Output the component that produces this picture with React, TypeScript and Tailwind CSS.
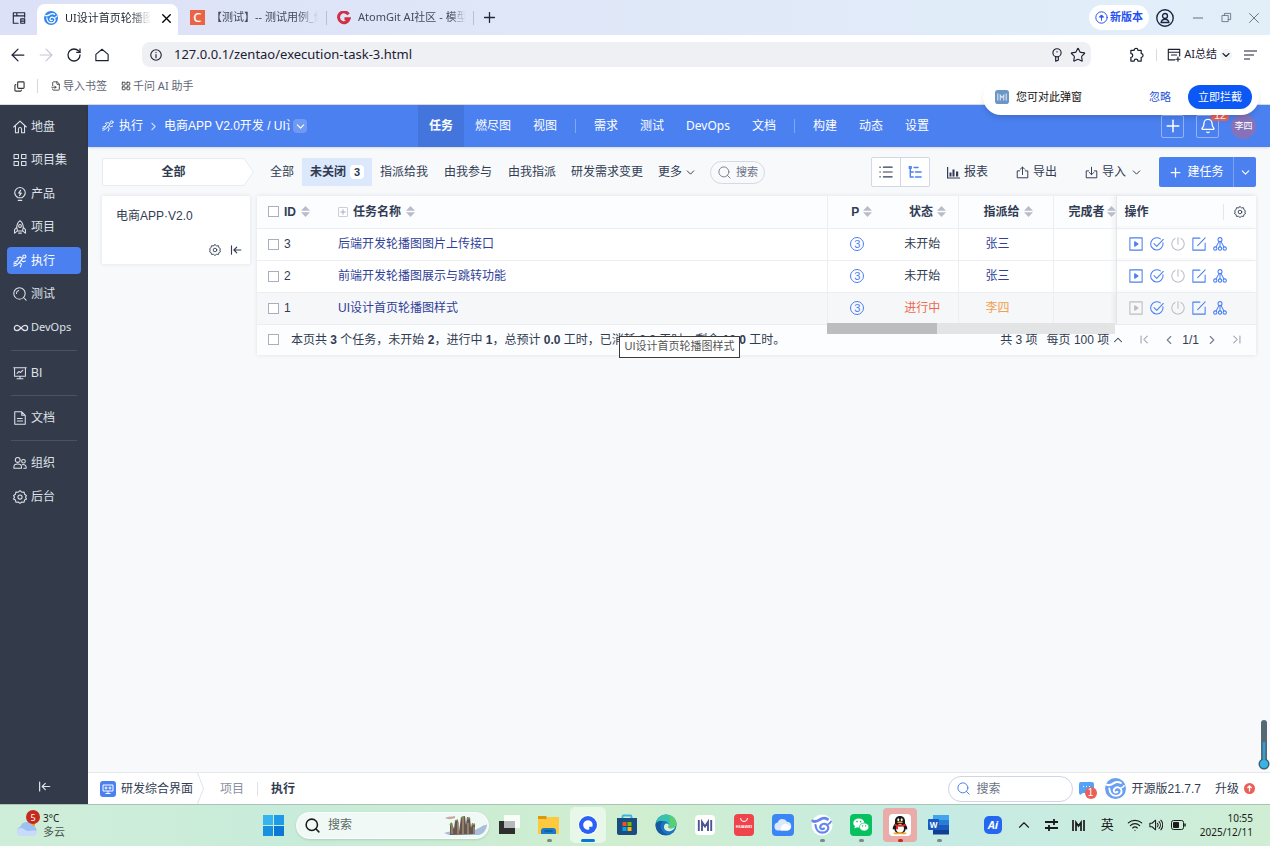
import { useState } from 'react';
import type { ReactNode } from 'react';
import {
    ArrowLeft,
    ArrowRight,
    Bell,
    ChevronDown,
    ChevronLeft,
    ChevronRight,
    ChevronUp,
    Copy,
    FileInput,
    Infinity as InfinityIcon,
    LayoutGrid,
    Minus,
    Plus,
    RotateCw,
    Search,
    Star,
    Wifi,
    X,
} from 'lucide-react';

interface IconProps {
    size?: number;
    className?: string;
}

interface SvgProps extends IconProps {
    children: ReactNode;
    stroke?: number;
}

// Base 16x16 para os ícones de traço
function Line({ size = 14, className, stroke = 1.2, children }: SvgProps) {
    return (
        <svg
            width={size}
            height={size}
            viewBox="0 0 16 16"
            fill="none"
            stroke="currentColor"
            strokeWidth={stroke}
            strokeLinecap="round"
            strokeLinejoin="round"
            className={className}
            aria-hidden="true"
        >
            {children}
        </svg>
    );
}

const HomeIcon = (p: IconProps) => (
    <Line {...p}>
        <path d="M.8 8 8 1.2 15.2 8M2.8 6.5v8h3.4v-4.2a1.8 1.8 0 0 1 3.6 0v4.2h3.4v-8" />
    </Line>
);

const GridIcon = (p: IconProps) => (
    <Line {...p}>
        <path d="M1.2 1.7h5v4.6h-5zM9.8 1.7h5v4.6h-5zM1.2 9.7h5v4.6h-5zM9.8 9.7h5v4.6h-5z" />
    </Line>
);

const BulbIcon = (p: IconProps) => (
    <Line {...p}>
        <path d="M5.7 12.2C3.5 11 2 9 2 6.6a6 6 0 0 1 12 0c0 2.400-1.500 4.400-3.700 5.600zM6 15.300h4" />
        <path d="M8.700 3.800 6.600 6.900h2.800L7.500 9.700" strokeWidth="1.400" />
    </Line>
);

const RocketIcon = (p: IconProps) => (
    <Line {...p}>
        <path d="M8 .8c2.600 2 3.800 4.800 3.600 8.200l-.7 3.500H5.100L4.400 9C4.200 5.600 5.400 2.800 8 .8zM4.300 8.500 1.800 11v4l3-2.300M11.700 8.500l2.500 2.500v4l-3-2.300M6.500 15h3" />
        <circle cx="8" cy="6.800" r="1.600" />
    </Line>
);

const RunIcon = (p: IconProps) => (
    <Line {...p}>
        <circle cx="13" cy="2.900" r="1.800" />
        <path d="M4.500 4.500 8 3.300l3 1.900-3.800 4.300 2.500 1.800-1.300 3.500M9.600 7.600l2 1.300 2.600-.8M7.200 9.500l-2.500 2.800-3.700 1.500M1.200 9.300l3.500-1M.8 11.300l3-.8M6.500 5.600 4.300 8" />
    </Line>
);

const TestIcon = (p: IconProps) => (
    <Line {...p}>
        <circle cx="7.400" cy="7.400" r="6.500" />
        <path d="m12 12 3 3M3.900 7.300a3.500 3.500 0 0 1 2.600-3.300" />
    </Line>
);

const BoardIcon = (p: IconProps) => (
    <Line {...p}>
        <path d="M.8 2h14.400M1.800 2v9.700h12.400V2M4.700 8.400l2.200-2.200 1.600 1.300 2.800-2.700M8 11.700v2.500M4.600 14.600h6.800" />
    </Line>
);

const DocIcon = (p: IconProps) => (
    <Line {...p}>
        <path d="M2 .9h8l4 4v10.200H2zM10 .9v4h4M5 8.500h5.500M5 11.500h6" />
    </Line>
);

const TeamIcon = (p: IconProps) => (
    <Line {...p}>
        <circle cx="5.400" cy="4.500" r="2.800" />
        <circle cx="12" cy="6" r="2.100" />
        <path d="M1 14v-1.500c0-2 1.700-3.300 4.400-3.300s4.300 1.300 4.300 3.300V14zM10.500 9.900c2.700-.4 4.500.8 4.500 2.700V14h-2.700" />
    </Line>
);

const GearIcon = (p: IconProps) => (
    <Line {...p}>
        <path d="m8 .7 2 1.800 2.700-.2.5 2.600 2.200 1.500L14.300 8l1.100 2.200-2.200 1.200-.5 2.500-2.700-.2L8 15.300l-2-1.600-2.700.2-.5-2.500L.6 10.200 1.700 8 .6 6.400l2.200-1.500.5-2.600 2.700.2z" />
        <circle cx="8" cy="8" r="2.400" />
    </Line>
);

const CollapseIcon = (p: IconProps) => (
    <Line {...p} stroke={1.5}>
        <path d="M2 2.500v11M14.500 8H5.500M9 4.200 5.200 8 9 11.800" />
    </Line>
);

const PlayBox = (p: IconProps) => (
    <Line {...p}>
        <path d="M1 1h14v14H1z" />
        <path d="M6.500 5.400v5.200L10.300 8z" fill="currentColor" />
    </Line>
);

const CheckRound = (p: IconProps) => (
    <Line {...p}>
        <path d="M14.700 6.500A7 7 0 1 1 11.900 2.100M4.600 7.600l3.100 3.200L15.200 2.800" />
    </Line>
);

const PowerIcon = (p: IconProps) => (
    <Line {...p}>
        <path d="M4.600 1.700a7.100 7.100 0 1 0 6.800 0M8 .7v7.500" />
    </Line>
);

const EditIcon = (p: IconProps) => (
    <Line {...p}>
        <path d="M9 1.300H1V15h14V7M6.500 9.800l8.500-8.800" />
    </Line>
);

const SplitIcon = (p: IconProps) => (
    <Line {...p}>
        <circle cx="8" cy="3" r="2.300" />
        <circle cx="2.600" cy="13.200" r="1.900" />
        <circle cx="8" cy="13.200" r="1.900" />
        <circle cx="13.400" cy="13.200" r="1.900" />
        <path d="M8 5.300v6M6.900 5 3.500 11.300M9.100 5l3.400 6.300" />
    </Line>
);

const SortIcon = () => (
    <svg width="9" height="11" viewBox="0 0 9 11" fill="#b8bcc8" aria-hidden="true">
        <path d="M4.500 0 9 4.700H0zM4.500 11 0 6.300h9z" />
    </svg>
);

function ZentaoLogo({ size = 14, bg, fg }: { size?: number; bg: string; fg: string }) {
    return (
        <svg width={size} height={size} viewBox="0 0 22 22" className="shrink-0" aria-hidden="true">
            <circle cx="11" cy="11" r="11" fill={bg} />
            <g fill="none" stroke={fg} strokeLinecap="round">
                <path d="M1.800 7C4.500 8.500 7 6.800 9 5.500s4.800-2 7.500-.3" strokeWidth="2.200" />
                <path d="M4.500 11c.3 4.500 3 7.700 7 7.700s6.500-3 5.700-6-5.200-4-7.200-1.500.3 5 3 3.300" strokeWidth="2" />
                <path d="M20 8c-.8 1.500-1.500 2-2.800 2.200" strokeWidth="1.600" />
            </g>
        </svg>
    );
}

function MLogo({ size = 14, bg, fg }: { size?: number; bg: string; fg: string }) {
    return (
        <svg width={size} height={size} viewBox="0 0 20 20" className="shrink-0" aria-hidden="true">
            <rect width="20" height="20" rx="4" fill={bg} />
            <path d="M4 5v10M16 5v10M7.500 15V7.500L10 11l2.500-3.500V15" fill="none" stroke={fg} strokeWidth="1.500" />
        </svg>
    );
}

const GRUPOS = [
    [
        { label: '地盘', Icon: HomeIcon },
        { label: '项目集', Icon: GridIcon },
        { label: '产品', Icon: BulbIcon },
        { label: '项目', Icon: RocketIcon },
        { label: '执行', Icon: RunIcon },
        { label: '测试', Icon: TestIcon },
        { label: 'DevOps', Icon: null },
    ],
    [{ label: 'BI', Icon: BoardIcon }],
    [{ label: '文档', Icon: DocIcon }],
    [
        { label: '组织', Icon: TeamIcon },
        { label: '后台', Icon: GearIcon },
    ],
];

const NAV = [
    ['任务', '燃尽图', '视图'],
    ['需求', '测试', 'DevOps', '文档'],
    ['构建', '动态', '设置'],
];

const TAREFAS = [
    { id: 3, nome: '后端开发轮播图图片上传接口', status: '未开始', responsavel: '张三' },
    { id: 2, nome: '前端开发轮播图展示与跳转功能', status: '未开始', responsavel: '张三' },
    { id: 1, nome: 'UI设计首页轮播图样式', status: '进行中', responsavel: '李四' },
];

const CHECK = 'block size-[11px] shrink-0 appearance-none border border-[#a9afc0] bg-white checked:bg-[#4b80f0]';

function TabStrip() {
    return (
        <div className="flex h-[35px] items-center bg-linear-to-r from-[#dde1f7] to-[#e2eff9] pr-[2px] text-[11px] text-[#444a5a]">
            <button aria-label="标签页" className="flex w-[37px] justify-center text-[#22283a]">
                <Line size={14} stroke={1.3}>
                    <path d="M7 14H1.500V2h13v5M1.500 5.500h13M5.500 2v3.500M10 9h4.500v5H10zM10 11.500h4.500" />
                </Line>
            </button>
            <div className="flex h-[31px] w-[141px] items-center self-end rounded-t-lg bg-white pr-[4px] pb-[3px] pl-[7px] text-[#1f2433]">
                <ZentaoLogo size={14} bg="#2f86ec" fg="#ffffff" />
                <span className="ml-[7px] w-[86px] overflow-hidden whitespace-nowrap mask-r-from-75%">UI设计首页轮播图样式</span>
                <button aria-label="关闭标签页" className="ml-auto text-black">
                    <X size={15} strokeWidth={2.2} />
                </button>
            </div>
            <div className="ml-3 flex items-center">
                <span className="flex size-[15px] items-center justify-center bg-[#ea6444] text-[13px] leading-none font-medium text-white">C</span>
                <span className="ml-[6px] w-[108px] overflow-hidden whitespace-nowrap mask-r-from-80%">【测试】-- 测试用例_你好</span>
            </div>
            <span className="mr-[10px] ml-[7px] h-[14px] w-px bg-[#b9bed2]" />
            <svg width="14" height="14" viewBox="0 0 14 14" fill="none" stroke="#d12f45" strokeWidth="3" aria-hidden="true">
                <path d="M11.500 3.300A5.400 5.400 0 1 0 12.200 7.700H7.500" />
            </svg>
            <span className="ml-[7px] w-[108px] overflow-hidden whitespace-nowrap mask-r-from-85%">AtomGit AI社区 - 模型库</span>
            <span className="ml-[7px] h-[14px] w-px bg-[#b9bed2]" />
            <button aria-label="新标签页" className="ml-[7px] text-[#22283a]">
                <Plus size={17} strokeWidth={1.8} />
            </button>
            <button className="ml-auto flex h-[25px] items-center gap-[2px] rounded-full bg-white px-[6px] font-bold text-[#2450f0]">
                <Line size={13}>
                    <circle cx="8" cy="8" r="7" />
                    <path d="M8 11.500v-5M5.700 7.200 8 4.800l2.300 2.400z" fill="currentColor" />
                </Line>
                新版本
            </button>
            <button aria-label="账户" className="ml-[7px] text-[#1c2340]">
                <Line size={18} stroke={1.2}>
                    <circle cx="8" cy="8" r="7.300" />
                    <circle cx="8" cy="6.200" r="2.200" />
                    <path d="M4.500 12c.4-2 1.700-2.900 3.500-2.900s3.100.9 3.500 2.900z" />
                </Line>
            </button>
            <div className="ml-[10px] flex items-center text-[#6b7180]">
                <button aria-label="最小化" className="flex w-7 justify-center"><Minus size={16} strokeWidth={1.5} /></button>
                <button aria-label="还原" className="flex w-7 justify-center">
                    <Line size={11} stroke={1.3}>
                        <path d="M2 5h8.500v9H2zM5 5V2h9v9h-3.500" />
                    </Line>
                </button>
                <button aria-label="关闭" className="flex w-7 justify-center"><X size={18} strokeWidth={1.3} /></button>
            </div>
        </div>
    );
}

function AddressBar() {
    return (
        <div className="flex h-[39px] items-center bg-white pr-[13px] pl-2 text-[#1c2033]">
            <div className="flex items-center gap-2">
                <button aria-label="后退" className="flex w-5 justify-center"><ArrowLeft size={20} strokeWidth={1.5} /></button>
                <button aria-label="前进" className="flex w-5 justify-center text-[#c3c6cf]"><ArrowRight size={20} strokeWidth={1.3} /></button>
                <button aria-label="刷新" className="flex w-5 justify-center"><RotateCw size={16} strokeWidth={1.9} /></button>
                <button aria-label="主页" className="flex w-5 justify-center">
                    <Line size={14} stroke={1.3}>
                        <path d="M8 1.500 1 7.300V14.500h14V7.300z" />
                    </Line>
                </button>
            </div>
            <div className="ml-[30px] flex h-[25px] w-[949px] items-center rounded-lg bg-[#eff0f3] pr-[5px] pl-2">
                <Line size={12} stroke={1.5}>
                    <circle cx="8" cy="8" r="7" />
                    <path d="M8 7.500v4M8 4.500v.3" />
                </Line>
                <input
                    aria-label="地址"
                    defaultValue="127.0.0.1/zentao/execution-task-3.html"
                    className="ml-3 min-w-0 flex-1 bg-transparent text-[13px] outline-none"
                />
                <button aria-label="密码">
                    <Line size={14} stroke={1.3}>
                        <circle cx="8" cy="5.500" r="4.700" />
                        <path d="M6.500 10v5l3-1v-4M8 4v.5" />
                    </Line>
                </button>
                <button aria-label="收藏" className="ml-[6px]"><Star size={16} strokeWidth={1.7} /></button>
            </div>
            <div className="ml-auto flex items-center">
                <button aria-label="扩展">
                    <Line size={15} stroke={1.3}>
                        <path d="M2 3.500h3.500a2 2 0 0 1 4 0H13V7a2 2 0 0 1 0 4v4H9.500a2 2 0 0 0-4 0H2v-4a2 2 0 0 0 0-4z" />
                    </Line>
                </button>
                <span className="mr-[10px] ml-3 h-3 w-px bg-[#d9dbe1]" />
                <button className="flex items-center gap-[3px] text-[11px]">
                    <Line size={14} stroke={1.3}>
                        <path d="M9 13.500H1.500V1.500h13V9M1.500 4.800h13M5 8h6M12.500 10.500v4.500M10.300 12.800h4.500" />
                    </Line>
                    AI总结
                    <span className="flex size-3 items-center justify-center rounded-full bg-[#f2f3f5]">
                        <ChevronDown size={12} strokeWidth={2.2} />
                    </span>
                </button>
                <button aria-label="菜单" className="ml-[11px]">
                    <svg width="14" height="10" viewBox="0 0 14 10" stroke="currentColor" strokeWidth="1.200" aria-hidden="true">
                        <path d="M1 1h13M1 5h10M1 9h6" />
                    </svg>
                </button>
            </div>
        </div>
    );
}

function BookmarkBar() {
    return (
        <div className="flex h-[31px] items-center border-b border-[#dcdde0] bg-white pb-[6px] pl-[14px] text-[11px] text-[#5e6475]">
            <Copy size={11} strokeWidth={2.4} className="-scale-y-100 text-[#333]" />
            <span className="mr-[13px] ml-3 h-[14px] w-px bg-[#d5d7dd]" />
            <a href="#importar" className="flex items-center gap-[2px]">
                <FileInput size={10} className="text-[#333]" />导入书签
            </a>
            <a href="#assistente" className="ml-[14px] flex items-center gap-[2px]">
                <LayoutGrid size={10} className="text-[#333]" />千问 AI 助手
            </a>
        </div>
    );
}

function PopupBlocker() {
    return (
        <div role="alert" className="absolute top-[79px] right-[11px] z-20 flex h-9 w-[276px] items-center rounded-full bg-white pr-[7px] pl-3 text-[11px] text-[#111] shadow-md">
            <MLogo size={14} bg="#6b96c6" fg="#dfeaf6" />
            <span className="ml-[7px]">您可对此弹窗</span>
            <button className="ml-auto text-[#1f55d8]">忽略</button>
            <button className="ml-[17px] h-6 w-16 rounded-full bg-[#0b58f5] text-white">立即拦截</button>
        </div>
    );
}

function Sidebar() {
    return (
        <aside className="flex w-[88px] shrink-0 flex-col bg-[#333a49] px-[7px] pt-2 text-xs text-[#dfe2ea]">
            {GRUPOS.map((grupo, i) => (
                <div key={grupo[0].label}>
                    {i > 0 && <hr className="mx-1 mt-[9px] mb-2 border-[#4b5262]" />}
                    <nav className={i === 0 ? 'flex h-57 flex-col justify-between' : 'flex flex-col gap-[7px]'}>
                        {grupo.map(({ label, Icon }) => (
                            <a
                                key={label}
                                href={`#${label}`}
                                className={
                                    label === '执行'
                                        ? 'flex h-[27px] items-center gap-1 rounded-sm bg-[#4b80f0] pl-[6px] text-white'
                                        : 'flex h-[27px] items-center gap-1 pl-[6px]'
                                }
                            >
                                {Icon ? <Icon size={14} /> : <InfinityIcon size={16} strokeWidth={1.8} className="-mr-[2px]" />}
                                {label === 'DevOps' ? <span className="font-['Noto_Sans'] text-[11px]">{label}</span> : label}
                            </a>
                        ))}
                    </nav>
                </div>
            ))}
            <button aria-label="收起菜单" className="mx-auto mt-auto mb-[11px]">
                <CollapseIcon size={13} />
            </button>
        </aside>
    );
}

function TopNav() {
    return (
        <header className="flex h-[42px] items-center bg-[#4b80f0] pr-[14px] pl-[14px] text-xs text-white shadow-sm">
            <div className="flex w-[316px] items-center">
                <RunIcon size={12} />
                <a href="#execucao" className="ml-[5px]">执行</a>
                <ChevronRight size={13} className="mx-1 opacity-70" />
                <a href="#projeto" className="w-[126px] overflow-hidden whitespace-nowrap">电商APP V2.0开发 / UI设计</a>
                <button aria-label="切换执行" className="ml-[3px] flex size-[14px] items-center justify-center rounded-sm bg-white/20">
                    <ChevronDown size={13} />
                </button>
            </div>
            <nav className="flex h-full items-center">
                {NAV.map((grupo, i) => (
                    <div key={grupo[0]} className="flex h-full items-center">
                        {i > 0 && <span className="mx-[7px] h-[14px] w-px bg-white/30" />}
                        {grupo.map(item => (
                            <a
                                key={item}
                                href={`#${item}`}
                                className={
                                    item === '任务'
                                        ? 'flex h-full items-center bg-[#4475dc] px-[11px] font-bold'
                                        : "flex h-full items-center px-[11px] font-['Noto_Sans','Noto_Sans_CJK_SC',sans-serif]"
                                }
                            >
                                {item}
                            </a>
                        ))}
                    </div>
                ))}
            </nav>
            <div className="ml-auto flex items-center gap-3">
                <button aria-label="新建" className="flex size-[23px] items-center justify-center rounded-xs border border-white/40">
                    <Plus size={20} strokeWidth={1.8} />
                </button>
                <button aria-label="通知" className="relative flex size-[23px] items-center justify-center rounded-xs border border-white/40">
                    <Bell size={16} />
                    <span className="absolute -top-[6px] left-[14px] flex h-[11px] w-[18px] items-center justify-center rounded-sm bg-[#e8635a] text-[11px] leading-none">12</span>
                </button>
                <button className="size-[25px] rounded-full bg-[#8672b8] text-[9px]">李四</button>
            </div>
        </header>
    );
}

function Toolbar() {
    const item = 'flex h-7 items-center px-2';
    return (
        <div className="flex h-[30px] items-center whitespace-nowrap">
            <button className="flex h-7 w-[152px] font-bold">
                <span className="flex h-full flex-1 items-center justify-center rounded-l-xs border border-r-0 border-[#e8ebf0] bg-white">全部</span>
                <svg width="10" height="28" viewBox="0 0 10 28" fill="#fff" stroke="#e8ebf0" aria-hidden="true">
                    <path d="M0 .5 9.500 14 0 27.500" />
                </svg>
            </button>
            <nav className="ml-2 flex items-center">
                <a href="#todas" className={item}>全部</a>
                <a href="#abertas" className="flex h-7 items-center gap-1 bg-[#dce8fc] px-2 font-bold">
                    未关闭
                    <span className="flex h-[14px] w-[14px] items-center justify-center rounded-sm bg-white text-[11px]">3</span>
                </a>
                <a href="#minhas" className={item}>指派给我</a>
                <a href="#participo" className={item}>由我参与</a>
                <a href="#delegadas" className={item}>由我指派</a>
                <a href="#mudancas" className="flex h-7 items-center px-[7px]">研发需求变更</a>
                <button className="flex h-7 items-center gap-[2px] pl-2">
                    更多
                    <ChevronDown size={13} strokeWidth={1.8} />
                </button>
            </nav>
            <button className="ml-[13px] flex h-[23px] items-center gap-1 rounded-full border border-[#d5d9e6] px-[6px] text-[#6b7387]">
                <Search size={15} strokeWidth={1.4} />
                <span className="text-[11px]">搜索</span>
            </button>
            <div className="ml-auto flex items-center">
                <div className="flex h-[30px] w-[59px] rounded-xs border border-[#d3d8e8] bg-white">
                    <button aria-label="列表" className="flex flex-1 items-center justify-center">
                        <Line size={14} stroke={1.4}>
                            <path d="M1 2.500h.5M1 8h.5M1 13.500h.5M5 2.500h10M5 8h10M5 13.500h10" />
                        </Line>
                    </button>
                    <button aria-label="树状" className="flex flex-1 items-center justify-center border-l border-[#d3d8e8] text-[#4b80f0]">
                        <Line size={14} stroke={1.6}>
                            <path d="M1.500 1.800h2.200v2H1.500zM2.600 4v9.700H6M2.600 8H6M7 2.800h4.500M8.500 8H15M8.500 13.700H15" />
                        </Line>
                    </button>
                </div>
                <button className="ml-[17px] flex items-center gap-1">
                    <svg width="13" height="13" viewBox="0 0 13 13" fill="currentColor" aria-hidden="true">
                        <path d="M0 1h1.200v10.500H13v1H0zM2.500 6.500h2v4h-2zM5.500 3.500h2v7h-2zM9 5.500h2.200v5H9z" />
                    </svg>
                    报表
                </button>
                <button className="ml-7 flex items-center gap-1">
                    <Line size={13}>
                        <path d="M4.500 6H1.500v8.500h13V6h-3M8 10.500v-9M5.300 4 8 1.300 10.700 4" />
                    </Line>
                    导出
                </button>
                <button className="ml-7 flex items-center gap-1">
                    <Line size={13}>
                        <path d="M4.500 6H1.500v8.500h13V6h-3M8 1.500v9M5.300 8 8 10.700 10.700 8" />
                    </Line>
                    导入
                    <ChevronDown size={13} strokeWidth={1.800} />
                </button>
                <div className="ml-4 flex h-[30px] overflow-hidden rounded-xs bg-[#4b80f0] text-white">
                    <button className="flex w-[75px] items-center justify-center gap-1 border-r border-[#7ba2f5]">
                        <Plus size={15} />
                        建任务
                    </button>
                    <button aria-label="更多建任务" className="flex w-[22px] items-center justify-center">
                        <ChevronDown size={13} />
                    </button>
                </div>
            </div>
        </div>
    );
}

function TaskTable() {
    const [marcadas, setMarcadas] = useState<number[]>([]);
    const todas = marcadas.length === TAREFAS.length;

    const alternar = (id: number) => {
        setMarcadas(prev => (prev.includes(id) ? prev.filter(x => x !== id) : [...prev, id]));
    };

    const alternarTodas = () => {
        setMarcadas(todas ? [] : TAREFAS.map(t => t.id));
    };

    return (
        <div className="min-w-0 flex-1 bg-white shadow-[0_0_4px_rgba(40,50,80,0.12)]">
            <table className="w-full table-fixed border-collapse text-left whitespace-nowrap">
                <colgroup>
                    <col className="w-[81px]" />
                    <col />
                    <col className="w-[60px]" />
                    <col className="w-[71px]" />
                    <col className="w-[95px]" />
                    <col className="w-[63px]" />
                    <col className="w-[140px]" />
                </colgroup>
                <thead>
                    <tr className="h-8 border-b border-[#eceef2] bg-[#fcfdfe]">
                        <th className="pl-[11px]">
                            <div className="flex items-center gap-[5px]">
                                <input type="checkbox" aria-label="全选" className={CHECK} checked={todas} onChange={alternarTodas} />
                                ID <SortIcon />
                            </div>
                        </th>
                        <th className="border-r border-[#eceef2]">
                            <div className="flex items-center gap-[5px]">
                                <button aria-label="展开全部" className="flex size-[10px] items-center justify-center rounded-[1px] border border-[#c9cedb] text-[#8790a5]">
                                    <Plus size={10} />
                                </button>
                                任务名称 <SortIcon />
                            </div>
                        </th>
                        <th>
                            <div className="flex items-center justify-center gap-1 pl-[9px]">P <SortIcon /></div>
                        </th>
                        <th className="border-r border-[#eceef2]">
                            <div className="flex items-center gap-1 pl-[22px]">状态 <SortIcon /></div>
                        </th>
                        <th className="border-r border-[#eceef2]">
                            <div className="flex items-center gap-1 pl-[25px]">指派给 <SortIcon /></div>
                        </th>
                        <th className="overflow-hidden">
                            <div className="flex items-center gap-[2px] pl-[15px]">完成者 <SortIcon /></div>
                        </th>
                        <th className="border-l border-[#e3e5ea] shadow-[-3px_0_4px_rgba(40,50,80,0.06)]">
                            <div className="flex items-center pr-[10px] pl-2">
                                操作
                                <span className="mr-[10px] ml-auto h-4 w-px bg-[#e3e6ec]" />
                                <button aria-label="列设置"><GearIcon size={12} /></button>
                            </div>
                        </th>
                    </tr>
                </thead>
                <tbody>
                    {TAREFAS.map(t => {
                        const ativa = t.status === '进行中';
                        return (
                            <tr key={t.id} className={ativa ? 'h-8 border-b border-[#eceef2] bg-[#f6f7f9]' : 'h-8 border-b border-[#eceef2]'}>
                                <td className="pl-[11px]">
                                    <label className="flex items-center gap-[5px]">
                                        <input type="checkbox" className={CHECK} checked={marcadas.includes(t.id)} onChange={() => alternar(t.id)} />
                                        {t.id}
                                    </label>
                                </td>
                                <td className="border-r border-[#eceef2]">
                                    <a href={`#task-${t.id}`} className="text-[#313f98]">{t.nome}</a>
                                </td>
                                <td>
                                    <span className="mx-auto flex size-[14px] items-center justify-center rounded-full border border-[#4b80f0] text-[11px] leading-none text-[#4b80f0]">3</span>
                                </td>
                                <td className={ativa ? 'border-r border-[#eceef2] text-center text-[#ee6a4d]' : 'border-r border-[#eceef2] text-center'}>{t.status}</td>
                                <td className="border-r border-[#eceef2] pl-[27px]">
                                    <a href="#usuario" className={ativa ? 'text-[#f0a04f]' : 'text-[#313f98]'}>{t.responsavel}</a>
                                </td>
                                <td />
                                <td className="border-l border-[#e3e5ea] shadow-[-3px_0_4px_rgba(40,50,80,0.06)]">
                                    <div className="flex items-center gap-[7px] pl-3 text-[#4b80f0]">
                                        <button aria-label="开始" disabled={ativa} className="disabled:text-[#bcbec4]"><PlayBox /></button>
                                        <button aria-label="完成"><CheckRound /></button>
                                        <button aria-label="关闭" disabled className="text-[#bcbec4]"><PowerIcon /></button>
                                        <button aria-label="编辑"><EditIcon /></button>
                                        <button aria-label="拆分"><SplitIcon /></button>
                                    </div>
                                </td>
                            </tr>
                        );
                    })}
                </tbody>
            </table>
            <div className="relative flex h-[30px] items-center bg-[#fcfdfe] pr-[14px] pl-[11px] whitespace-nowrap">
                {/* Barra de rolagem das colunas centrais */}
                <div className="absolute -top-[2px] right-[141px] h-[11px] w-[288px] bg-[#e3e4e6]">
                    <div className="h-full w-[110px] bg-[#bdbdbd]" />
                </div>
                <label className="flex items-center gap-3">
                    <input type="checkbox" className={CHECK} checked={todas} onChange={alternarTodas} />
                    <span>
                        本页共 <b>3</b> 个任务，未开始 <b>2</b>，进行中 <b>1</b>，总预计 <b>0.0</b> 工时，已消耗 <b>0.0</b> 工时，剩余 <b>10.0</b> 工时。
                    </span>
                </label>
                <div className="ml-auto flex items-center">
                    <span>共 3 项</span>
                    <button className="ml-[9px] flex items-center gap-[2px]">
                        每页 100 项 <ChevronUp size={14} strokeWidth={1.8} />
                    </button>
                    <button aria-label="第一页" className="ml-[14px] text-[#9aa0ae]">
                        <Line size={11} stroke={1.5}><path d="M3 3v10M12 3 7 8l5 5" /></Line>
                    </button>
                    <button aria-label="上一页" className="ml-3 text-[#7b8295]"><ChevronLeft size={14} /></button>
                    <span className="mx-[6px]">1/1</span>
                    <button aria-label="下一页" className="text-[#7b8295]"><ChevronRight size={14} /></button>
                    <button aria-label="最后一页" className="ml-3 text-[#9aa0ae]">
                        <Line size={11} stroke={1.5}><path d="M13 3v10M4 3l5 5-5 5" /></Line>
                    </button>
                </div>
                <div role="tooltip" className="absolute top-[11px] left-[362px] z-10 flex h-[22px] w-[121px] items-center justify-center border border-[#3c3c3c] bg-white text-[11px] text-[#555]">
                    UI设计首页轮播图样式
                </div>
            </div>
        </div>
    );
}

function AppFooter() {
    return (
        <footer className="flex h-8 items-center border-t border-[#e6e8ee] bg-white pr-[15px] pl-3">
            <svg width="16" height="16" viewBox="0 0 16 16" fill="none" stroke="#fff" aria-hidden="true">
                <rect width="16" height="16" rx="3" fill="#4b80f0" stroke="none" />
                <path d="M3 4h10v6H3zM8 10v2M5.500 12.500h5" />
                <circle cx="6" cy="7" r="1" />
                <circle cx="10" cy="7" r="1" />
            </svg>
            <a href="#interface" className="ml-[5px]">研发综合界面</a>
            <svg width="7" height="31" viewBox="0 0 7 31" fill="none" stroke="#dfe2e9" className="ml-1" aria-hidden="true">
                <path d="M.5 0 6.500 15.500.5 31" />
            </svg>
            <a href="#projetos" className="ml-4 text-[#8b91a0]">项目</a>
            <span className="mx-[13px] h-[14px] w-px bg-[#dfe2e9]" />
            <a href="#execucoes" className="font-bold">执行</a>
            <label className="ml-auto flex h-[26px] w-[125px] items-center gap-[6px] rounded-full border border-[#cfd4e6] px-[7px] text-[#4b80f0]">
                <Search size={15} strokeWidth={1.6} />
                <input aria-label="搜索" placeholder="搜索" className="w-20 bg-transparent outline-none placeholder:text-[#6b7387]" />
            </label>
            <button aria-label="消息" className="relative ml-[6px] h-4 w-[15px]">
                <svg width="15" height="13" viewBox="0 0 15 13" aria-hidden="true">
                    <path d="M2 0h11a2 2 0 0 1 2 2v7a2 2 0 0 1-2 2H4l-3 2-1-2V2a2 2 0 0 1 2-2z" fill="#55a3f5" />
                    <path d="M4 4.500h1M7 4.500h1M10 4.500h1" stroke="#fff" strokeWidth="1.200" />
                </svg>
                <span className="absolute top-[6px] left-[6px] flex size-3 items-center justify-center rounded-full bg-[#ea5f57] text-[10px] leading-none text-white">1</span>
            </button>
            <span className="mr-[6px] ml-[11px]"><ZentaoLogo size={21} bg="#6b9ff2" fg="#ffffff" /></span>
            <span>开源版21.7.7</span>
            <a href="#atualizar" className="ml-[14px] flex items-center gap-[5px]">
                升级
                <svg width="11" height="11" viewBox="0 0 11 11" aria-hidden="true">
                    <circle cx="5.500" cy="5.500" r="5.500" fill="#ea5f57" />
                    <path d="M5.500 8.500v-5M3.400 5 5.500 2.900 7.600 5" fill="none" stroke="#fff" strokeWidth="1.300" />
                </svg>
            </a>
        </footer>
    );
}

const APPS: { nome: string; estado?: 'aberto' | 'ativo' | 'alerta'; desenho: ReactNode }[] = [
    {
        nome: '任务视图',
        desenho: (
            <>
                <path d="M0 7h16v13H0z" fill="#2e2e2e" />
                <path d="M5 1h16v13H5z" fill="#fff" opacity=".85" />
                <path d="M5 7h11v7H5z" fill="#b5b9b8" />
            </>
        ),
    },
    {
        nome: '文件资源管理器',
        estado: 'aberto',
        desenho: (
            <>
                <path d="M0 2h8l2 3H0z" fill="#d99a12" />
                <path d="M0 5l8 0 2-2h11v17H0z" fill="#fcc93f" />
                <path d="M3 20v-3a3 3 0 0 1 3-3h9a3 3 0 0 1 3 3v3z" fill="#1a7bc8" />
                <path d="M6.500 17h8" stroke="#0d5a99" strokeWidth="1.500" />
            </>
        ),
    },
    {
        nome: '夸克',
        estado: 'ativo',
        desenho: (
            <>
                <circle cx="11" cy="11" r="10" fill="#fff" />
                <circle cx="11" cy="11" r="9" fill="#2a62f5" />
                <path d="M11 6.300a4.700 4.700 0 1 0 1.200 9.200v-2.700h3.200A4.700 4.700 0 0 0 11 6.300z" fill="#fff" />
            </>
        ),
    },
    {
        nome: '应用商店',
        desenho: (
            <>
                <path d="M6.500 5V2.500a1 1 0 0 1 1-1h7a1 1 0 0 1 1 1V5" fill="none" stroke="#36b3ea" strokeWidth="1.800" />
                <path d="M1 4h20v15a2 2 0 0 1-2 2H3a2 2 0 0 1-2-2z" fill="#1b4e80" />
                <path d="M6.500 8h4v4h-4z" fill="#f25022" />
                <path d="M11.500 8h4v4h-4z" fill="#7fba00" />
                <path d="M6.500 13h4v4h-4z" fill="#00a4ef" />
                <path d="M11.500 13h4v4h-4z" fill="#ffb900" />
            </>
        ),
    },
    {
        nome: 'Edge',
        desenho: (
            <>
                <circle cx="11" cy="11" r="10.500" fill="#1b74bf" />
                <path d="M.7 9.500C2 3.500 6.500.5 11 .5c6 0 10.500 4.500 10.500 9 0 3.500-3 5-5.500 5s-3.500-1.200-2.500-2.500S13 7 9 7 1.500 8 .7 9.500z" fill="#37c2b0" />
                <path d="M14 1c4.500 1.200 7.500 5 7.500 8.500 0 3.500-3 5-5.500 5s-3.500-1.200-2.500-2.500S16 6 14 1z" fill="#57cf72" />
                <path d="M13.500 12c-1 1.300 0 2.500 2.500 2.500 1.700 0 3.300-.6 4.300-1.700-1 3.700-6.300 5.700-9.300 3.700s-2.500-6.500.5-7c1.700 0 2.700 1 2 2.500z" fill="#d9f0dc" />
                <path d="M.7 9.500C2 7.500 5 6.500 8 7.500 4 10 5 19 13 20.500 5 23-.5 16 .7 9.500z" fill="#155a9f" />
            </>
        ),
    },
    {
        nome: '电脑管家',
        desenho: (
            <>
                <rect x="1" y="1" width="20" height="20" rx="4" fill="#fff" />
                <path d="M4.800 6v11M17.200 6v11M8 17V8l3 4.500L14 8v9" fill="none" stroke="#4d5596" strokeWidth="1.900" />
            </>
        ),
    },
    {
        nome: '华为应用市场',
        desenho: (
            <>
                <rect x="1" y="0" width="20" height="22" rx="4" fill="#f0444c" />
                <path d="M7.500 4a3.500 3.500 0 0 0 7 0" fill="none" stroke="#fff" />
                <text x="11" y="14" fontSize="4" fontWeight="700" textAnchor="middle" fill="#fff">HUAWEI</text>
            </>
        ),
    },
    {
        nome: '云空间',
        desenho: (
            <>
                <rect width="22" height="22" rx="4" fill="#3a86f4" />
                <path d="M6 16.500a4 4 0 0 1-.3-7.900 5 5 0 0 1 9.300-.8 4.400 4.400 0 0 1 .8 8.700z" fill="#dbe9ff" />
                <path d="M9 16.500a5 5 0 0 1 7.500-5.800 3 3 0 0 1-.7 5.800z" fill="#fff" />
            </>
        ),
    },
    {
        nome: '禅道',
        estado: 'aberto',
        desenho: (
            <>
                <circle cx="11" cy="11" r="10.500" fill="#fff" />
                <g fill="none" stroke="#6586ef" strokeLinecap="round">
                    <path d="M1.800 7C4.500 8.500 7 6.800 9 5.500s4.800-2 7.500-.3" strokeWidth="2.800" />
                    <path d="M4.500 11c.3 4.500 3 7.700 7 7.700s6.500-3 5.700-6-5.200-4-7.200-1.500.3 5 3 3.300" strokeWidth="2.200" />
                    <path d="M20 7.500c-.8 1.500-1.500 2.500-2.800 2.700" strokeWidth="1.800" />
                </g>
            </>
        ),
    },
    {
        nome: '微信',
        estado: 'aberto',
        desenho: (
            <>
                <rect width="22" height="22" rx="4" fill="#07c160" />
                <ellipse cx="8.800" cy="9" rx="5.500" ry="4.600" fill="#fff" />
                <path d="m5 12-.6 2.500L7.500 13z" fill="#fff" />
                <ellipse cx="14.200" cy="13" rx="4.700" ry="4" fill="#fff" stroke="#07c160" strokeWidth=".7" />
                <g fill="#07c160">
                    <circle cx="7" cy="7.600" r=".8" />
                    <circle cx="10.600" cy="7.600" r=".8" />
                    <circle cx="12.700" cy="12" r=".7" />
                    <circle cx="15.700" cy="12" r=".7" />
                </g>
            </>
        ),
    },
    {
        nome: 'QQ',
        estado: 'alerta',
        desenho: (
            <>
                <rect width="22" height="22" rx="4" fill="#fff" />
                <path d="M11 2c3.300 0 5 2.300 5 5v2.500c1 1.500 2.500 3.500 2.300 5.500-.3 1-1 .5-1.500-.3-.5 3.300-2.600 4.800-5.800 4.800s-5.300-1.500-5.800-4.800c-.5.8-1.200 1.300-1.500.3-.2-2 1.300-4 2.300-5.500V7c0-2.700 1.700-5 5-5z" fill="#171717" />
                <ellipse cx="11" cy="14.500" rx="4" ry="4.300" fill="#fff" />
                <ellipse cx="9.300" cy="5.800" rx="1" ry="1.500" fill="#fff" />
                <ellipse cx="12.700" cy="5.800" rx="1" ry="1.500" fill="#fff" />
                <ellipse cx="11" cy="8.300" rx="3" ry=".9" fill="#f6a21a" />
                <path d="M5.500 9.700c3.500 1.600 7.500 1.600 11 0l.3 2c-2.800 1.200-5.600 1.300-7.800.9v2.700H7v-3.200l-1.600-.6z" fill="#e5262b" />
                <path d="M5.500 19.300h4.700M11.800 19.300h4.700" stroke="#f6a21a" strokeWidth="1.800" strokeLinecap="round" />
            </>
        ),
    },
    {
        nome: 'Word',
        estado: 'aberto',
        desenho: (
            <>
                <path d="M5 1h16v5H5z" fill="#41a5ee" />
                <path d="M5 6h16v5H5z" fill="#2b7cd3" />
                <path d="M5 11h16v5H5z" fill="#185abd" />
                <path d="M5 16h16v4.500H5z" fill="#103f91" />
                <rect y="5" width="11" height="11" rx="1" fill="#185abd" />
                <text x="5.500" y="13.500" fontSize="8" fontWeight="700" textAnchor="middle" fill="#fff">W</text>
            </>
        ),
    },
];

const FUNDO_APP = {
    aberto: '',
    ativo: 'bg-white/50 ring-1 ring-white/50',
    alerta: 'bg-[#e9aca8]',
};

const MARCA_APP = {
    aberto: 'w-[5px] bg-[#7d8a84]',
    ativo: 'w-[14px] bg-[#0a78d4]',
    alerta: 'w-[5px] bg-[#c42b1c]',
};

function Taskbar() {
    return (
        <div className="flex h-[42px] items-center border-t border-[#a9c4b6] bg-[linear-gradient(90deg,#cfeed9,#c8ecda_22%,#d0eecf_50%,#c6ebe4_74%,#c9ece0_85%,#cfeed3)] pr-[17px] pb-[1px] pl-4 text-[#1b1b1b]">
            <button className="flex w-[247px] items-center gap-[5px] text-left text-[10px] leading-[14px]">
                <span className="relative">
                    <svg width="22" height="28" viewBox="0 0 22 28" aria-hidden="true">
                        <circle cx="15" cy="13" r="4" fill="#f59a23" />
                        <path d="M5 25a5 5 0 0 1-.5-9.500 6.500 6.500 0 0 1 12-1A5.500 5.500 0 0 1 17 25z" fill="#9fc1f2" />
                        <path d="M5 25a4 4 0 0 1 0-8c3 0 4 3 7 3s6-1 9 0c0 3-2 5-4 5z" fill="#c8dcfa" />
                    </svg>
                    <span className="absolute -top-[1px] left-[10px] flex size-[14px] items-center justify-center rounded-full bg-[#c42b1c] text-[9px] leading-none text-white">5</span>
                </span>
                <span>
                    3°C<br />
                    <span className="text-[11px] text-[#4b5a52]">多云</span>
                </span>
            </button>
            <button aria-label="开始">
                <svg width="21" height="21" viewBox="0 0 21 21" aria-hidden="true">
                    <path d="M0 0h10v10H0z" fill="#36b4f0" />
                    <path d="M11 0h10v10H11z" fill="#1e9be8" />
                    <path d="M0 11h10v10H0z" fill="#1a90e0" />
                    <path d="M11 11h10v10H11z" fill="#0a78d4" />
                </svg>
            </button>
            <label className="ml-3 flex h-[27px] w-[193px] items-center rounded-full border border-white/70 bg-[#f0f9f5] pr-[1px] pl-[7px] shadow-sm">
                <Search size={17} strokeWidth={2.2} />
                <input aria-label="搜索应用" placeholder="搜索" className="ml-[7px] min-w-0 flex-1 bg-transparent text-xs outline-none placeholder:text-[#5d6a64]" />
                <svg width="43" height="23" viewBox="0 0 43 23" aria-hidden="true">
                    <path d="M1 4c3-2 7-1 10-2v2c-3 1-6 2-10 0z" fill="#c7a9a4" />
                    <path d="M0 19c7-3 12 0 18 0s15-3 22-8c3 1 3-1 3-4 1 7-3 13-8 14H5z" fill="#a7bfd8" />
                    <path d="M6 21V11l2-2 1 3 1 3 1-8 3-1 1 12 2-15 4-1 1 9 1-8 3 1 1 10 1-5 3 2v9z" fill="#64574f" />
                    <path d="M8 20v-9M14 20V8M19 20V4M24 20V9M30 20v-7" stroke="#a58d77" strokeWidth="1.500" />
                    <path d="M11 7l3-1M17 4l3-1M23 5l3-1M28 11l3-1M6 11l2-2" stroke="#79924c" strokeWidth="1.800" />
                </svg>
            </label>
            <div className="ml-1 flex gap-[5px]">
                {APPS.map(app => (
                    <button
                        key={app.nome}
                        aria-label={app.nome}
                        className={`relative flex h-[34px] w-[34px] items-center justify-center rounded-sm ${app.estado ? FUNDO_APP[app.estado] : ''}`}
                    >
                        <svg width="22" height="22" viewBox="0 0 22 22" aria-hidden="true">{app.desenho}</svg>
                        {app.estado && <span className={`absolute bottom-0 h-[3px] rounded-full ${MARCA_APP[app.estado]}`} />}
                    </button>
                ))}
            </div>
            <div className="ml-auto flex items-center">
                <svg width="18" height="18" viewBox="0 0 18 18" aria-hidden="true">
                    <rect width="18" height="18" rx="5" fill="#2468f2" />
                    <text x="9" y="13" fontSize="11" fontWeight="700" fontStyle="italic" textAnchor="middle" fill="#fff">Ai</text>
                </svg>
                <ChevronUp size={18} strokeWidth={1.5} className="ml-[13px]" />
                <svg width="13" height="12" viewBox="0 0 13 12" stroke="currentColor" strokeWidth="1.800" className="ml-3" aria-hidden="true">
                    <path d="M0 3h13M0 9h13M9 0v6M4 6v6" />
                </svg>
                <svg width="13" height="11" viewBox="0 0 13 11" fill="none" stroke="currentColor" strokeWidth="1.700" className="ml-[14px]" aria-hidden="true">
                    <path d="M1 0v11M12 0v11M4 11V2.500L6.500 6 9 2.500V11" />
                </svg>
                <span className="ml-4 text-[13px]">英</span>
                <Wifi size={16} strokeWidth={1.8} className="ml-[13px]" />
                <Line size={14} className="ml-[6px]">
                    <path d="M1 6h2.500L7.500 2.500v11L3.500 10H1zM9.500 6a3 3 0 0 1 0 4M11.500 4.200a5.500 5.500 0 0 1 0 7.600M13.500 2.500a8 8 0 0 1 0 11" />
                </Line>
                <svg width="15" height="10" viewBox="0 0 15 10" fill="none" stroke="currentColor" className="ml-2" aria-hidden="true">
                    <rect x=".5" y=".5" width="12" height="9" rx="2" />
                    <path d="M2.500 2.500h5v5h-5z" fill="currentColor" />
                    <path d="M14 3.500v3" strokeWidth="1.500" />
                </svg>
                <time className="ml-[14px] text-right text-[10px] leading-[14px]">
                    10:55<br />2025/12/11
                </time>
            </div>
        </div>
    );
}

export default function App() {
    return (
        <div className="relative flex min-h-screen flex-col font-['Noto_Sans','Noto_Sans_CJK_SC',sans-serif]">
            <TabStrip />
            <AddressBar />
            <BookmarkBar />
            <PopupBlocker />
            <div className="flex flex-1 font-['Liberation_Sans','Noto_Sans_CJK_SC',sans-serif]">
                <Sidebar />
                <div className="relative flex min-w-0 flex-1 flex-col bg-[#f7f9fb] text-xs text-[#313c52]">
                    <TopNav />
                    <main className="flex flex-1 flex-col gap-[9px] pt-[10px] pr-[14px] pl-[14px]">
                        <Toolbar />
                        <div className="flex items-start gap-[7px]">
                            <section className="flex h-[68px] w-[148px] flex-col justify-between bg-white pt-3 pr-2 pb-2 pl-[14px] shadow-[0_0_4px_rgba(40,50,80,0.12)]">
                                <a href="#versao">电商APP·V2.0</a>
                                <div className="flex justify-end gap-[9px]">
                                    <button aria-label="设置"><GearIcon size={12} /></button>
                                    <button aria-label="收起"><CollapseIcon size={12} /></button>
                                </div>
                            </section>
                            <TaskTable />
                        </div>
                    </main>
                    <AppFooter />
                    <svg width="12" height="50" viewBox="0 0 12 50" className="absolute right-0 bottom-[34px]" aria-hidden="true">
                        <rect x="3" y="0" width="6" height="44" rx="3" fill="#566973" />
                        <circle cx="6" cy="44" r="5.500" fill="#46606c" />
                        <path d="M6 22v20" stroke="#2e9fd8" strokeWidth="2.500" />
                        <circle cx="6" cy="44" r="4" fill="#35b5e5" />
                    </svg>
                </div>
            </div>
            <Taskbar />
        </div>
    );
}
